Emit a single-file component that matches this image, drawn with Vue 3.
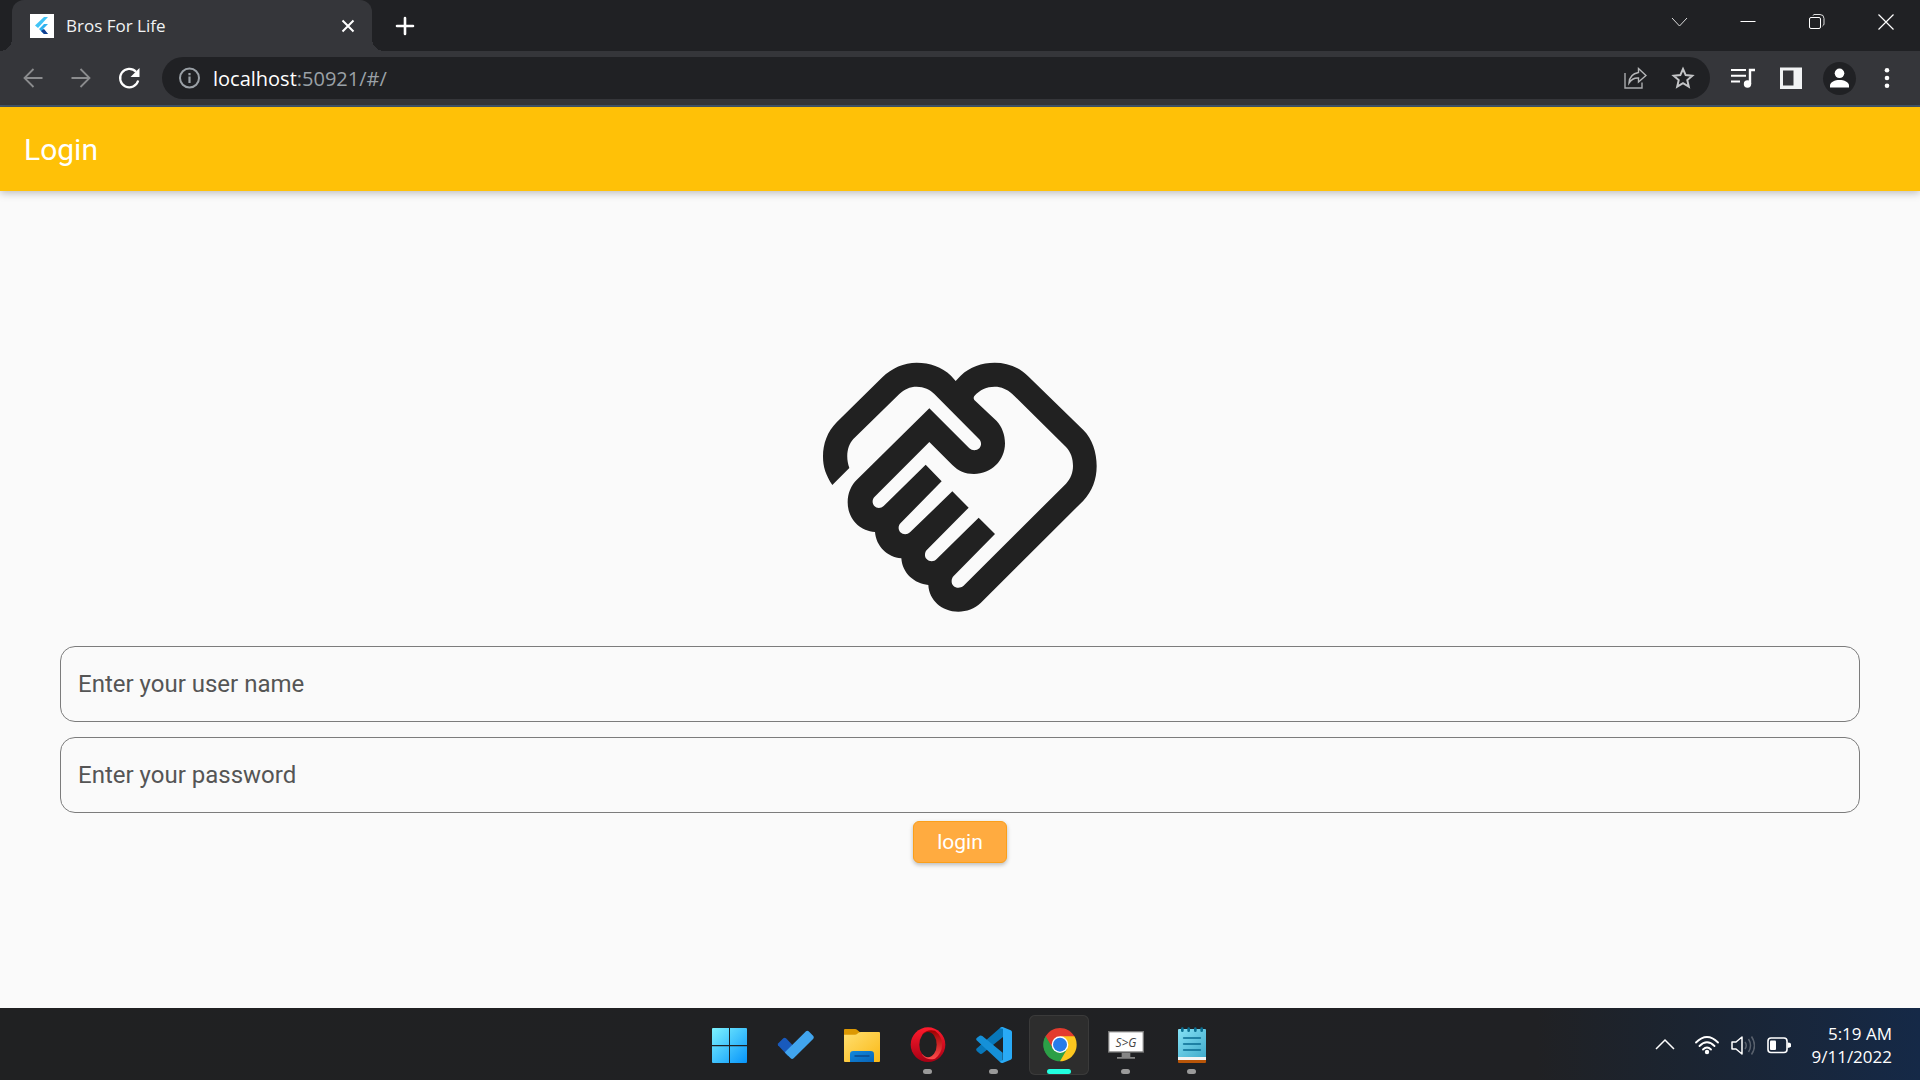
<script setup>
import { ref } from 'vue'

const username = ref('')
const password = ref('')
</script>

<template>
  <div class="screen">
    <header class="browser">
      <div class="strip">
        <div class="tab">
          <svg class="favicon" viewBox="0 0 24 24" aria-hidden="true">
            <rect width="24" height="24" fill="#fff" />
            <path d="M14 3h4L8 14l-3-2.500z" fill="#41c4f6" />
            <path d="M14 10h4l-5 5 5 5h-4l-5-5z" fill="#2fb1ee" />
            <path d="M11 17l3-2 4 5h-4z" fill="#123f91" />
          </svg>
          <span class="tab-title">Bros For Life</span>
          <button class="tab-close" aria-label="Close tab">
            <svg width="24" height="24" viewBox="0 0 24 24"><path d="M6.500 6.500l11 11m0-11l-11 11" stroke="#fff" stroke-width="2" fill="none" /></svg>
          </button>
        </div>
        <button class="new-tab" aria-label="New tab">
          <svg width="24" height="24" viewBox="0 0 24 24"><path d="M12 4v16M4 12h16" stroke="#fff" stroke-width="2.600" stroke-linecap="round" /></svg>
        </button>
        <div class="window-buttons">
          <button aria-label="Search tabs">
            <svg width="24" height="24" viewBox="0 0 24 24"><path d="M5 8l7.500 8L20 8" stroke="#ddd" fill="none" /></svg>
          </button>
          <button aria-label="Minimize">
            <svg width="24" height="24" viewBox="0 0 24 24"><path d="M4.500 11.500h15" stroke="#fff" /></svg>
          </button>
          <button aria-label="Restore">
            <svg width="24" height="24" viewBox="0 0 24 24"><rect x="4.500" y="7.500" width="11" height="11" rx="1.500" stroke="#fff" fill="none" /><path d="M8 5.500q0-.5 1-1h6q4 0 4 4v5.500q0 1-1.500 2" stroke="#ddd" fill="none" /></svg>
          </button>
          <button aria-label="Close">
            <svg width="24" height="24" viewBox="0 0 24 24"><path d="M4.500 4.500l15 15m0-15l-15 15" stroke="#fff" stroke-width="1.200" /></svg>
          </button>
        </div>
      </div>

      <div class="toolbar">
        <button class="tool" aria-label="Back">
          <svg viewBox="0 0 24 24"><path d="M21.500 12H3.500M12.500 3L3.500 12l9 9" stroke="#8b8c8e" stroke-width="1.800" fill="none" /></svg>
        </button>
        <button class="tool" aria-label="Forward">
          <svg viewBox="0 0 24 24"><path d="M2.500 12h18M11.500 3l9 9-9 9" stroke="#8b8c8e" stroke-width="1.800" fill="none" /></svg>
        </button>
        <button class="tool" aria-label="Reload">
          <svg viewBox="0 0 24 24"><path d="M19 5.800A9.200 9.200 0 1 0 21.200 14.500" stroke="#fff" stroke-width="2.200" fill="none" /><path d="M22.500 2v9h-9z" fill="#fff" /></svg>
        </button>
        <div class="omnibox">
          <svg viewBox="0 0 24 24" aria-hidden="true"><circle cx="12.500" cy="12" r="9.500" stroke="#9aa0a6" stroke-width="2" fill="none" /><path d="M12.500 10.500v6.500M12.500 7v2.200" stroke="#9aa0a6" stroke-width="2.200" /></svg>
          <span class="url">localhost<span class="path">:50921/#/</span></span>
          <button class="tool" aria-label="Share">
            <svg viewBox="0 0 24 24"><path d="M2 7v15h17v-5.500" stroke="#a9abad" stroke-width="1.400" fill="none" /><path d="M15.500 2.500L23 9.500 15.500 16v-4q-6-.5-9.500 5 .5-9 9.500-10.500z" stroke="#b5b6b8" stroke-width="1.400" fill="none" /></svg>
          </button>
          <button class="tool" aria-label="Bookmark">
            <svg viewBox="0 0 24 24"><path d="M12 3l2.700 6.100 6.600.6-5 4.400 1.500 6.500L12 17.200l-5.800 3.400 1.500-6.500-5-4.400 6.600-.6z" stroke="#c4c5c7" stroke-width="2" fill="none" /></svg>
          </button>
        </div>
        <div class="actions">
          <button class="tool" aria-label="Media controls">
            <svg viewBox="0 0 24 24"><path d="M0 4h15M0 9.800h15M0 15.500h9" stroke="#fff" stroke-width="2" /><path d="M19 18V4h5" stroke="#fff" stroke-width="2.400" fill="none" /><circle cx="16.500" cy="18" r="3.700" fill="#fff" /></svg>
          </button>
          <button class="tool" aria-label="Side panel">
            <svg viewBox="0 0 24 24"><path fill-rule="evenodd" d="M1 1.500h22v21.500H1zM4 4.500v15h10.500v-15z" fill="#f1f3f4" /></svg>
          </button>
          <button class="tool avatar" aria-label="Profile">
            <svg viewBox="0 0 24 24"><circle cx="12.500" cy="7.300" r="4.800" fill="#fff" /><path d="M3 21.500v-2c0-3.500 5-5.500 9.500-5.500s9.500 2 9.500 5.500v2z" fill="#fff" /></svg>
          </button>
          <button class="tool" aria-label="Menu">
            <svg viewBox="0 0 24 24"><g fill="#fff"><circle cx="12" cy="4.200" r="2.300" /><circle cx="12" cy="12" r="2.300" /><circle cx="12" cy="19.800" r="2.300" /></g></svg>
          </button>
        </div>
      </div>
    </header>

    <div class="app-bar"><h1>Login</h1></div>

    <main>
      <svg class="handshake" viewBox="30 -36 900 900" aria-hidden="true">
        <path
          fill="#212121"
          fill-rule="evenodd"
          d="M97 435C77 405 69 380 69 350C69 312 82 275 110 247L247 112C275 84 312 68 350 68C390 68 425 80 453 107L467 123L482 107C510 80 545 68 584 68C622 68 658 82 686 110L850 270C877 297 890 338 890 378C890 418 877 453 850 482L542 789C524 806 500 815 475 815C425 815 387 780 385 735C343 731 307 700 304 655C262 652 228 618 225 576C178 573 143 535 143 487C143 460 153 436 172 418L388 205L508 325C516 333 530 333 538 325C545 317 545 305 537 297L403 162C390 149 372 140 350 140C330 140 312 148 298 162L160 297C142 316 136 350 148 384Z
          M523 180L590 243C606 260 615 285 615 310C615 362 574 402 522 402C495 402 475 393 457 375L388 306L224 470C216 478 216 490 223 498C230 506 243 506 251 498L377 374L425 424L302 549C294 557 294 568 301 577C309 585 322 585 330 577L457 454L506 503L381 629C373 637 373 650 380 657C388 666 402 666 410 657L536 533L585 582L461 708C453 716 453 730 460 737C468 745 481 745 490 738L798 431C812 417 819 397 819 378C819 357 813 337 798 321L636 161C622 148 604 140 584 140C560 140 540 149 523 168Q519 174 523 180Z"
        />
      </svg>
      <form @submit.prevent>
        <input v-model="username" type="text" placeholder="Enter your user name" aria-label="Enter your user name" />
        <input v-model="password" type="password" placeholder="Enter your password" aria-label="Enter your password" />
        <button class="login" type="submit">login</button>
      </form>
    </main>

    <footer class="taskbar">
      <nav class="apps">
        <button class="app" aria-label="Start">
          <svg viewBox="27 45 180 180">
            <defs><linearGradient id="win" gradientUnits="userSpaceOnUse" x1="66" y1="84" x2="170" y2="189"><stop stop-color="#7df3fe" /><stop offset="1" stop-color="#0795fb" /></linearGradient></defs>
            <path fill="url(#win)" d="M69 84h48v51H66V87q0-3 3-3zM120 84h48q3 0 3 3v48h-51zM66 139h51v50H69q-3 0-3-3zM120 139h51v47q0 3-3 3h-48z" />
          </svg>
        </button>
        <button class="app" aria-label="To Do">
          <svg viewBox="225 45 180 180">
            <path d="M264 136q-2-3 1-6l15-15q4-3 8 0l28 29-21 25z" fill="#185abd" />
            <path d="M286 155l62-61q4-3 8 0l14 14q3 4 0 8l-59 59q-5 4-9 0l-16-16q-2-2 0-4z" fill="#41a5ee" />
          </svg>
        </button>
        <button class="app" aria-label="File Explorer">
          <svg viewBox="423 45 180 180">
            <defs>
              <linearGradient id="folder" x1="0" y1="0" x2="1" y2="1"><stop stop-color="#ffdf70" /><stop offset="1" stop-color="#fbb916" /></linearGradient>
              <linearGradient id="tray" x1="0" y1="0" x2="1" y2="1"><stop stop-color="#1389dd" /><stop offset="1" stop-color="#0864b8" /></linearGradient>
            </defs>
            <path d="M462 90q0-3 3-3h30q4 0 7 3l8 7v10h-48z" fill="#dc9803" />
            <path d="M462 104h33q4 0 7-3l4-3q3-2 6-2h55q3 0 3 3v84q0 3-3 3H465q-3 0-3-3z" fill="url(#folder)" />
            <path d="M480 186v-23q0-10 10-10h52q10 0 10 10v23z" fill="url(#tray)" />
            <path d="M495 168h42" stroke="#0d4a8c" stroke-width="4" stroke-linecap="round" />
          </svg>
        </button>
        <button class="app running" aria-label="Opera">
          <svg viewBox="621 45 180 180">
            <defs>
              <linearGradient id="opera" x1="0" y1="0" x2="0" y2="1"><stop stop-color="#ff1b2d" /><stop offset="1" stop-color="#a70014" /></linearGradient>
              <linearGradient id="opera-side" x1="0" y1="0" x2="0" y2="1"><stop stop-color="#9c0000" /><stop offset="1" stop-color="#ff4b4b" /></linearGradient>
            </defs>
            <circle cx="714" cy="134" r="52" fill="url(#opera)" />
            <path d="M697 103q15-17 38-11a52 52 0 0 1 0 84q-23 7-38-11z" fill="url(#opera-side)" />
            <ellipse cx="714" cy="134" rx="26" ry="38" fill="#202122" />
          </svg>
        </button>
        <button class="app running" aria-label="Visual Studio Code">
          <svg viewBox="39 45 180 180">
            <path d="M79 146q-2 4 2 8l9 7q4 2 8-1l61-49V81q-6 0-10 4z" fill="#0877b9" />
            <path d="M79 120q-2-4 2-7l8-6q4-2 8 1l61 50v31q-5 0-9-4z" fill="#1590d8" />
            <path d="M158 81l24 10q4 2 4 6v76q0 4-4 6l-24 10q-4 0-9-4l10-5V86l-10-1q5-4 9-4z" fill="#29aaf6" />
          </svg>
        </button>
        <button class="app active" aria-label="Chrome">
          <svg viewBox="237 45 180 180">
            <path d="M330 134L286.700 109A50 50 0 0 1 373.300 109z" fill="#e33b2e" />
            <path d="M330 134V109h43.300A50 50 0 0 1 330 184z" fill="#fdc71f" />
            <path d="M286.700 109A50 50 0 0 0 330 184l21.700-37.500L330 134z" fill="#2c9f47" />
            <path d="M286.700 109H330v25l-21.700 12.500z" fill="#e33b2e" />
            <path d="M286.700 109l21.700 37.500L320 150l-4 31A50 50 0 0 1 286.700 109z" fill="#2c9f47" />
            <circle cx="330" cy="134" r="25" fill="#fff" />
            <circle cx="330" cy="134" r="21" fill="#287cea" />
          </svg>
        </button>
        <button class="app running" aria-label="ScreenToGif">
          <svg viewBox="435 45 180 180">
            <path d="M501 171h54v5h-54zM515 158h26v14h-26z" fill="#858585" />
            <rect x="476" y="95" width="104" height="61" fill="#fff" stroke="#777" stroke-width="4" />
            <text class="screen-text" x="528" y="140" text-anchor="middle">S&gt;G</text>
          </svg>
        </button>
        <button class="app running" aria-label="Notepad">
          <svg viewBox="633 45 180 180">
            <defs><linearGradient id="note" x1="0" y1="0" x2="1" y2="1"><stop stop-color="#85e2f6" /><stop offset="1" stop-color="#41abcb" /></linearGradient></defs>
            <path d="M684 176h84v10q0 3-3 3h-78q-3 0-3-3z" fill="#b85508" />
            <path d="M684 168h84v12h-84z" fill="#f4f4f4" />
            <path d="M687 87h78q3 0 3 3v81h-84V90q0-3 3-3z" fill="url(#note)" />
            <path d="M697 86v6M716 86v6M736 86v6M755 86v6" stroke="#0b6f91" stroke-width="8" stroke-linecap="round" />
            <path d="M701 114h50M701 132h50M701 150h50" stroke="#086b91" stroke-width="5" stroke-linecap="round" />
          </svg>
        </button>
      </nav>
      <div class="tray">
        <svg viewBox="0 0 24 24"><path d="M3 16l9-9 9 9" stroke="#fff" stroke-width="1.500" fill="none" /></svg>
        <svg viewBox="0 0 24 24"><g stroke="#fff" stroke-width="1.800" fill="none" stroke-linecap="round"><path d="M1 9.500q11-11 22 0M4.500 13q7.500-7.500 15 0M8 16.500q4-4 8 0" /></g><circle cx="12" cy="19" r="2.200" fill="#fff" /></svg>
        <svg viewBox="0 0 24 24"><path d="M1 9h4l6-5v17l-6-5H1z" stroke="#fff" stroke-width="1.500" fill="none" stroke-linejoin="round" /><path d="M14 9q2.500 3.500 0 7M17.500 6q4 6.500 0 13M20.500 3.500q6 9 0 18" stroke="#59616d" stroke-width="1.500" fill="none" /></svg>
        <svg viewBox="0 0 24 24"><rect x="1" y="5" width="19" height="14.500" rx="3" stroke="#fff" stroke-width="1.600" fill="none" /><rect x="3" y="7.500" width="6" height="9.500" rx="1" fill="#fff" /><path d="M20.500 9.500q4 0 4 2.700t-4 2.700z" fill="#fff" /></svg>
        <time datetime="2022-09-11T05:19">5:19 AM<br />9/11/2022</time>
      </div>
    </footer>
  </div>
</template>

<style>
body {
  margin: 0;
}
</style>

<style scoped>
.screen {
  display: flex;
  flex-direction: column;
  min-height: 100vh;
  background: #fafafa;
  font-family: Roboto, sans-serif;
}

button {
  display: flex;
  align-items: center;
  justify-content: center;
  padding: 0;
  border: 0;
  background: none;
}

svg {
  display: block;
  flex: none;
}

.browser {
  background: #35363a;
  border-bottom: 2px solid #42566b;
  font-family: "Open Sans", sans-serif;
}

.strip {
  display: flex;
  height: 51px;
  padding-left: 12px;
  background: #202124;
}

.tab {
  position: relative;
  display: flex;
  align-items: center;
  box-sizing: border-box;
  width: 360px;
  padding: 0 12px 0 18px;
  border-radius: 12px 12px 0 0;
  background: #35363a;
}

.tab::before,
.tab::after {
  content: "";
  position: absolute;
  bottom: 0;
  width: 12px;
  height: 12px;
}

.tab::before {
  right: 100%;
  background: radial-gradient(circle at 0 0, transparent 12px, #35363a 12px);
}

.tab::after {
  left: 100%;
  background: radial-gradient(circle at 100% 0, transparent 12px, #35363a 12px);
}

.favicon {
  width: 24px;
  height: 24px;
}

.tab-title {
  flex: 1;
  margin-left: 12px;
  color: #f1f3f4;
  font-size: 17px;
}

.new-tab {
  width: 66px;
}

.window-buttons {
  display: flex;
  height: 43px;
  margin-left: auto;
}

.window-buttons button {
  width: 69px;
}

.toolbar {
  display: flex;
  align-items: center;
  gap: 9px;
  padding: 6px 9px;
}

.tool {
  flex: none;
  width: 48px;
  height: 42px;
}

.tool + .tool {
  margin-left: -9px;
}

.tool svg,
.omnibox svg {
  width: 24px;
  height: 24px;
}

.omnibox {
  display: flex;
  flex: 1;
  align-items: center;
  height: 42px;
  padding: 0 3px 0 15px;
  border-radius: 21px;
  background: #202124;
}

.omnibox .tool + .tool,
.actions .tool + .tool {
  margin-left: 0;
}

.url {
  flex: 1;
  margin-left: 12px;
  color: #fff;
  font-size: 20px;
}

.path {
  color: #9aa0a6;
}

.actions {
  display: flex;
}

.avatar::before {
  content: "";
  position: absolute;
  width: 33px;
  height: 33px;
  border-radius: 50%;
  background: #202124;
}

.avatar svg {
  position: relative;
}

.app-bar {
  position: relative;
  display: flex;
  align-items: center;
  height: 84px;
  padding: 0 24px;
  background: #ffc107;
  box-shadow: 0 2px 8px rgba(0, 0, 0, 0.25);
}

h1 {
  margin: 0;
  color: #fff;
  font-size: 30px;
  font-weight: 400;
}

main {
  display: flex;
  flex: 1;
  flex-direction: column;
  align-items: center;
  justify-content: center;
  padding: 0 60px;
}

.handshake {
  width: 300px;
  height: 300px;
}

form {
  display: flex;
  flex-direction: column;
  align-items: center;
  gap: 15px;
  width: 100%;
  margin: 18px 0 8px;
}

input {
  box-sizing: border-box;
  width: 100%;
  height: 76px;
  padding: 0 17px;
  border: 1px solid #7c7c7c;
  border-radius: 15px;
  outline: 0;
  background: transparent;
  color: #212121;
  font: 24px Roboto, sans-serif;
}

input::placeholder {
  color: #555;
  opacity: 1;
}

.login {
  width: 94px;
  height: 42px;
  margin-top: -7px;
  border: 1px solid #fb9f1a;
  border-radius: 6px;
  background: #ffab40;
  box-shadow: 0 2px 4px rgba(0, 0, 0, 0.25);
  color: #fff;
  font: 21px Roboto, sans-serif;
}

.taskbar {
  display: grid;
  grid-template-columns: 1fr auto 1fr;
  align-items: center;
  box-sizing: border-box;
  height: 72px;
  padding-top: 2px;
  background: linear-gradient(90deg, #202122 0, #202124 80%, #1b2431 88%, #152947 100%);
}

.apps {
  display: flex;
  grid-column: 2;
  gap: 6px;
}

.app {
  position: relative;
  width: 60px;
  height: 60px;
  border-radius: 6px;
}

.app svg {
  width: 60px;
  height: 60px;
}

.screen-text {
  fill: #444;
  font: italic 36px "Open Sans", sans-serif;
}

.active {
  background: #2d2d2d;
  box-shadow: inset 0 0 0 1px #3a3a3a;
}

.running::after,
.active::after {
  content: "";
  position: absolute;
  bottom: 1px;
  width: 9px;
  height: 5px;
  border-radius: 3px;
  background: #9a9a9a;
}

.active::after {
  width: 24px;
  background: #22ffe0;
}

.tray {
  display: flex;
  align-items: center;
  justify-content: flex-end;
  gap: 12px;
  padding-right: 28px;
  color: #fff;
}

.tray svg {
  width: 24px;
  height: 24px;
}

.tray svg:first-child {
  margin-right: 6px;
}

time {
  margin-left: 8px;
  font: 17px/23px "Open Sans", sans-serif;
  text-align: right;
}
</style>
